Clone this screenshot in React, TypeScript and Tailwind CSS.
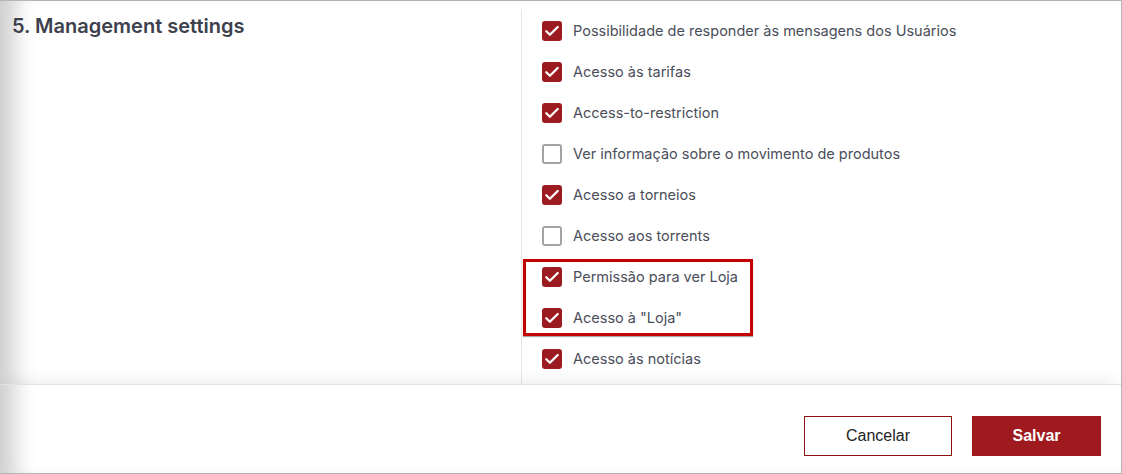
import React, { useState } from 'react';

const PERMISSIONS = [
  { label: 'Possibilidade de responder às mensagens dos Usuários', checked: true },
  { label: 'Acesso às tarifas', checked: true },
  { label: 'Access-to-restriction', checked: true },
  { label: 'Ver informação sobre o movimento de produtos', checked: false },
  { label: 'Acesso a torneios', checked: true },
  { label: 'Acesso aos torrents', checked: false },
  { label: 'Permissão para ver Loja', checked: true },
  { label: 'Acesso à "Loja"', checked: true },
  { label: 'Acesso às notícias', checked: true },
];

interface RowProps {
  label: string;
  checked: boolean;
  onToggle: () => void;
  tight?: boolean;
}

const CheckRow = ({ label, checked, onToggle, tight }: RowProps) => (
  <button className={`flex items-center gap-[11px] text-left ${tight ? 'h-[30px]' : 'h-[41px]'}`} onClick={onToggle}>
    {checked ? (
      <span className="flex h-5 w-5 items-center justify-center rounded-[3px] bg-[#9c1b20]">
        <svg width="20" height="20" viewBox="0 0 20 20" fill="none">
          <path d="M4.3 10.2l3.6 3.6L15.7 6" stroke="white" strokeWidth="2.3" strokeLinecap="round" strokeLinejoin="round" />
        </svg>
      </span>
    ) : (
      <span className="h-5 w-5 rounded-[3px] border-2 border-[#a3a3a3] bg-white" />
    )}
    <span className="text-[14.5px] text-[#4a4e5a]">{label}</span>
  </button>
);

const App: React.FC = () => {
  const [items, setItems] = useState(PERMISSIONS);

  const toggle = (idx: number) => () => {
    setItems((prev) => prev.map((it, i) => (i === idx ? { ...it, checked: !it.checked } : it)));
  };

  const plain = items.map((it, i) => ({ ...it, i }));
  const before = plain.slice(0, 6);
  const boxed = plain.slice(6, 8);
  const after = plain.slice(8);

  return (
    <div className="flex h-[474px] w-[1122px] flex-col overflow-hidden border-y border-r border-[#b5b5b5] bg-white font-['Inter',sans-serif] shadow-[inset_28px_0_22px_-14px_rgba(0,0,0,0.2)]">
      <div className="flex h-[383px]">
        <div className="w-[521px] pl-3 pt-[10px]">
          <h2 className="text-[20px] font-semibold text-[#3d414d]">5. Management settings</h2>
        </div>
        <div className="mt-2 flex flex-col border-l border-[#e6e6e6] pt-[1px]">
          <div className="flex flex-col pl-5">
            {before.map((it) => (
              <CheckRow key={it.label} label={it.label} checked={it.checked} onToggle={toggle(it.i)} />
            ))}
          </div>
          <div className="mb-[2px] ml-[1px] mt-[3px] flex w-[230px] flex-col gap-[11px] border-[3px] border-[#c40000] pl-4 shadow-[0_1px_1px_rgba(0,0,0,0.35)]">
            {boxed.map((it) => (
              <CheckRow key={it.label} tight label={it.label} checked={it.checked} onToggle={toggle(it.i)} />
            ))}
          </div>
          <div className="flex flex-col pl-5">
            {after.map((it) => (
              <CheckRow key={it.label} label={it.label} checked={it.checked} onToggle={toggle(it.i)} />
            ))}
          </div>
        </div>
      </div>
      <div className="relative flex flex-1 items-start justify-end gap-5 border-t border-[#e2e2e2] pr-5 pt-[31px] shadow-[0_-10px_14px_-6px_rgba(0,0,0,0.07)]">
        <button className="h-10 w-[148px] border border-[#8a1014] bg-white font-['Liberation_Sans',sans-serif] text-[16px] text-[#222]">
          Cancelar
        </button>
        <button className="h-10 w-[129px] bg-[#9e1a1e] font-['Liberation_Sans',sans-serif] text-[16px] font-bold text-white">
          Salvar
        </button>
      </div>
    </div>
  );
};

export default App;
